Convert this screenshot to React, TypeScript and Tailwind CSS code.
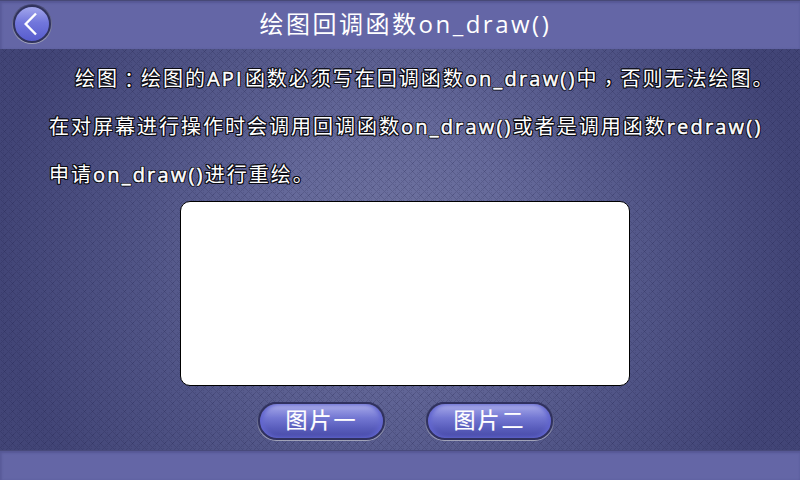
import type { ReactNode } from "react";

const font = "font-['Open_Sans','Noto_Sans_CJK_SC',sans-serif]";

function Backdrop() {
  return (
    <svg className="absolute inset-0" width="800" height="480" aria-hidden="true">
      <defs>
        <radialGradient id="glow" gradientUnits="userSpaceOnUse" cx="400" cy="240" r="400">
          <stop offset="0" stopColor="#6e729f" />
          <stop offset="0.3" stopColor="#65699a" />
          <stop offset="0.65" stopColor="#515587" />
          <stop offset="1" stopColor="#424577" />
        </radialGradient>
        <pattern id="weave" width="8" height="8" patternUnits="userSpaceOnUse" shapeRendering="crispEdges">
          <path d="M0 0h1v1h1v1h1v1h1v1h1v1h1v1h1v1h1v-1h-1v-1h-1v-1h-1v-1h-1v-1h-1v-1h-1v-1h-1v-1z" fill="#15183f" fillOpacity=".18" />
          <path d="M7 0h1v1h-1v1h-1v1h-1v1h-1v1h-1v1h-1v1h-1v1h-1v-1h1v-1h1v-1h1v-1h1v-1h1v-1h1v-1h1z" fill="#15183f" fillOpacity=".18" />
          <path d="M3 0h1v1h-1zM5 2h1v1h-1zM1 4h1v1h-1zM3 6h1v1h-1z" fill="#15183f" fillOpacity=".14" />
        </pattern>
      </defs>
      <rect width="800" height="480" fill="url(#glow)" />
      <rect width="800" height="480" fill="url(#weave)" />
    </svg>
  );
}

function Code({ children }: { children: ReactNode }) {
  return <span className="tracking-[2.2px] [-webkit-text-stroke:0.5px_white]">{children}</span>;
}

function PictureButton({ label }: { label: string }) {
  return (
    <button className="flex h-[39px] w-[129px] rounded-full bg-gradient-to-b from-[#30335f] to-[#a2a4ba] p-px pt-0">
      <span className="flex h-[38px] w-full items-center justify-center rounded-full border-2 border-[#30315f] bg-[linear-gradient(#b4b6ea_0%,#8f92df_20%,#7478d3_40%,#5a5ebd_70%,#474aa5_100%)] pb-[4px] text-[22px] leading-8 tracking-[2px] text-white shadow-[inset_3px_0_4px_#6266cf,inset_-3px_0_4px_#6266cf] [-webkit-text-stroke:0.2px_white]">
        {label}
      </span>
    </button>
  );
}

export default function App() {
  return (
    <div className={`relative isolate h-[480px] w-[800px] overflow-hidden bg-[#4c4e80] text-white ${font}`}>
      <Backdrop />
      <div className="relative flex h-full flex-col">
        <header className="flex h-[49px] shrink-0 border-t border-[#474977] bg-[#6466a6] pl-3 shadow-[inset_0_2px_2px_#565895,inset_2px_0_2px_#5b5d9b]">
          <button className="mt-[3px] flex size-10 shrink-0 items-center justify-center rounded-full bg-gradient-to-b from-[#42446f] to-[#a2a4ba] p-px" aria-label="返回">
            <span className="flex size-[38px] items-center justify-center rounded-full border-2 border-[#30325d] bg-[linear-gradient(#a3a7ec,#7277dc_45%,#575ccd)]">
              <svg width="34" height="34" viewBox="0 0 34 34" fill="none" stroke="white" strokeWidth="2.4">
                <path d="M21 6.5L10.7 17L21 27.5" />
              </svg>
            </span>
          </button>
          <h1 className="ml-[207.5px] whitespace-nowrap text-[24px] leading-[46px] tracking-[2.5px]">绘图回调函数on_draw()</h1>
        </header>

        <main className="flex h-[401px] flex-col">
          <div className="h-[152px] whitespace-nowrap pl-[49px] pt-[6px] text-[20px] leading-[48px] tracking-[2px] [text-shadow:1px_0_#0c0c14,-1px_0_#0c0c14,0_1px_#0c0c14,0_-1px_#0c0c14,1px_1px_#0c0c14,-1px_1px_#0c0c14,1px_-1px_#0c0c14,-1px_-1px_#0c0c14]">
            <p className="h-12 pl-[26px]">绘图<span className="relative top-[2px] font-['Noto_Sans_CJK_TC',sans-serif] leading-none">：</span>绘图的<span className="mr-px"><Code>API</Code></span>函数必须写在回调函数<Code>on_draw()</Code>中<span className="relative top-[5px] font-['Noto_Sans_CJK_TC',sans-serif] leading-none">，</span>否则无法绘图。</p>
            <p className="h-12">在对屏幕进行操作时会调用回调函数<Code>on_draw()</Code>或者是调用函数<Code>redraw()</Code></p>
            <p className="h-12">申请<Code>on_draw()</Code>进行重绘。</p>
          </div>
          <div className="ml-[180px] h-[185px] w-[450px] shrink-0 rounded-[10px] border border-black bg-white" />
          <div className="ml-[257px] mt-4 flex gap-[39px]">
            <PictureButton label="图片一" />
            <PictureButton label="图片二" />
          </div>
        </main>

        <footer className="h-[30px] shrink-0 border-t border-[#484a7b] bg-[#6466a6] shadow-[inset_0_2px_2px_#565895,inset_2px_0_2px_#5b5d9b]" />
      </div>
    </div>
  );
}
